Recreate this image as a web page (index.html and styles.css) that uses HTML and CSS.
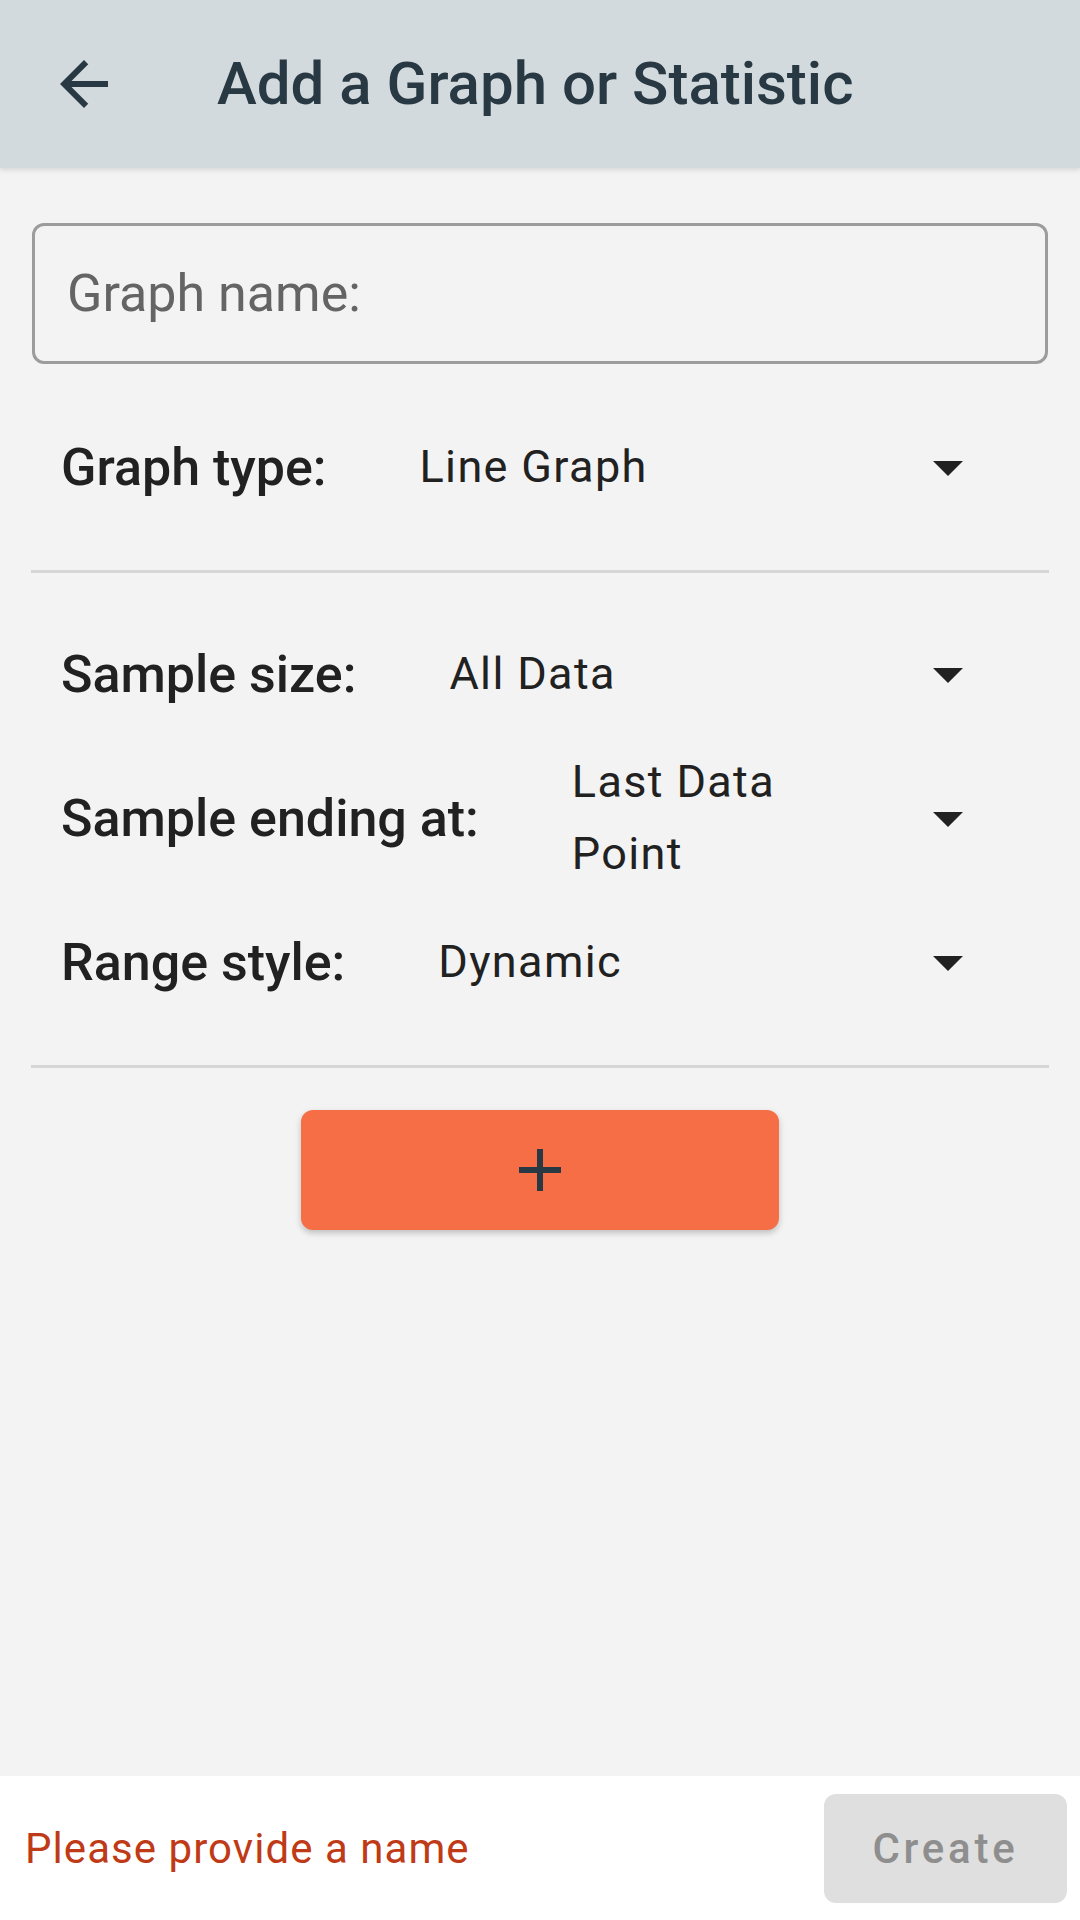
FILE: index.html
```html
<!DOCTYPE html>
<html lang="en">
<head>
<meta charset="utf-8">
<title>Add a Graph or Statistic</title>
<link rel="stylesheet" href="styles.css">
</head>
<body>
<div class="screen">
  <header class="appbar">
    <button class="back" aria-label="Back">
      <svg viewBox="0 0 24 24" width="72" height="72"><path d="M20 11H7.83l5.59-5.59L12 4l-8 8 8 8 1.41-1.41L7.83 13H20v-2z" fill="#283944"/></svg>
    </button>
    <h1 class="title">Add a Graph or Statistic</h1>
  </header>

  <main class="content">
    <div class="name-field"><span class="placeholder">Graph name:</span></div>

    <section class="section">
      <div class="row">
        <span class="label">Graph type:</span>
        <div class="spinner"><span class="value">Line Graph</span><span class="caret"></span></div>
      </div>
    </section>
    <hr class="divider">

    <section class="section">
      <div class="row">
        <span class="label">Sample size:</span>
        <div class="spinner"><span class="value">All Data</span><span class="caret"></span></div>
      </div>
      <div class="row">
        <span class="label">Sample ending at:</span>
        <div class="spinner"><span class="value narrow">Last Data Point</span><span class="caret"></span></div>
      </div>
      <div class="row">
        <span class="label">Range style:</span>
        <div class="spinner"><span class="value">Dynamic</span><span class="caret"></span></div>
      </div>
    </section>
    <hr class="divider">

    <div class="add-wrap">
      <button class="add" aria-label="Add">
        <svg viewBox="0 0 42 42" width="42" height="42"><rect x="18" y="0" width="6" height="42" fill="#283944"/><rect x="0" y="18" width="42" height="6" fill="#283944"/></svg>
      </button>
    </div>
  </main>

  <footer class="bottombar">
    <span class="error">Please provide a name</span>
    <button class="create" disabled>Create</button>
  </footer>
</div>
</body>
</html>
```

FILE: styles.css
```css
* { box-sizing: border-box; }
html, body { margin: 0; padding: 0; }
body {
  font-family: Roboto, "Noto Sans", sans-serif;
  background: #f3f3f3;
  color: #212121;
}
.screen {
  width: 1080px;
  height: 1920px;
  display: flex;
  flex-direction: column;
  overflow: hidden;
}
.appbar {
  height: 168px;
  flex: none;
  background: #d2dade;
  display: flex;
  align-items: center;
  box-shadow: 0 2px 5px rgba(0,0,0,0.12);
  position: relative;
  z-index: 1;
}
.back {
  width: 72px;
  height: 72px;
  margin-left: 48px;
  padding: 0;
  border: 0;
  background: none;
  display: flex;
}
.title {
  margin: 0 0 0 97px;
  font-size: 60px;
  font-weight: 500;
  color: #283944;
  letter-spacing: 0;
  line-height: 1;
}
.content {
  flex: 1;
  padding: 55px 31px 0;
  display: flex;
  flex-direction: column;
}
.name-field {
  height: 141px;
  margin: 0 1px;
  border: 3px solid #9c9c9c;
  border-radius: 12px;
  display: flex;
  align-items: center;
  padding-left: 32px;
}
.placeholder {
  font-size: 52px;
  color: #646464;
  letter-spacing: 0;
}
.section {
  padding: 31px 0;
  display: flex;
  flex-direction: column;
}
.section + .divider + .section { padding-top: 29px; }
.row {
  height: 144px;
  display: flex;
  align-items: center;
  padding-left: 30px;
}
.label {
  font-size: 52px;
  font-weight: 500;
  color: #212121;
  margin-right: 93px;
  white-space: nowrap;
}
.spinner {
  flex: 1;
  display: flex;
  align-items: center;
  padding-right: 86px;
}
.value {
  flex: 1;
  font-size: 45px;
  line-height: 72px;
  letter-spacing: 0.03em;
  color: #212121;
}
.value.narrow { max-width: 320px; flex: none; margin-right: auto; }
.caret {
  width: 0;
  height: 0;
  border-left: 15px solid transparent;
  border-right: 15px solid transparent;
  border-top: 15px solid #212121;
  margin-top: 3px;
}
.divider {
  margin: 0;
  border: 0;
  height: 3px;
  background: #d6d6d6;
}
.add-wrap {
  display: flex;
  justify-content: center;
  padding-top: 42px;
}
.add {
  width: 478px;
  height: 120px;
  border: 0;
  border-radius: 12px;
  background: #f56e45;
  box-shadow: 0 3px 6px rgba(0,0,0,0.22);
  display: flex;
  align-items: center;
  justify-content: center;
  padding: 0;
}
.bottombar {
  height: 144px;
  flex: none;
  background: #ffffff;
  display: flex;
  align-items: center;
  justify-content: space-between;
  padding: 0 13px 0 25px;
}
.error {
  font-size: 42px;
  color: #bf3a16;
  letter-spacing: 0.025em;
}
.create {
  width: 243px;
  height: 109px;
  border: 0;
  border-radius: 12px;
  background: #dfdfdf;
  color: #8e8e8e;
  font-family: Roboto, "Noto Sans", sans-serif;
  font-size: 42px;
  font-weight: 500;
  letter-spacing: 0.09em;
  padding: 0;
}
```
